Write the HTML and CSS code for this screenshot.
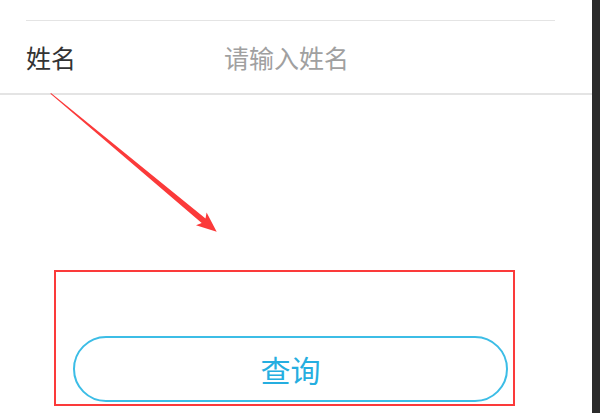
FILE: index.html
```html
<!DOCTYPE html>
<html>
<head>
	<meta charset="utf-8">
	<title>查询</title>
	<link rel="stylesheet" href="styles.css">
</head>
<body>

<div class="page">
	<div class="form-row prev"></div>
	<div class="form-row">
		<label class="field-label" for="name">姓名</label>
		<input class="field-input" id="name" type="text" placeholder="请输入姓名">
	</div>

	<div class="highlight">
		<button class="btn-query" type="button">查询</button>
	</div>

	<!-- annotation arrow -->
	<svg class="arrow" width="592" height="413" viewBox="0 0 592 413">
		<polygon fill="#fb3a3a" points="51,92.9 205.5,218.5 206.6,212.6 216.7,231.7 196,225.2 201.7,223.1 50.4,93.7"></polygon>
	</svg>
</div>
<div class="scrollbar"></div>

</body>
</html>
```
FILE: styles.css
```css
html, body {
	margin: 0;
	height: 100%;
}

body {
	display: flex;
	overflow: hidden;
	background-color: #fff;
	font-family: "Noto Sans CJK SC", "Noto Sans", sans-serif;
}

.page {
	position: relative;
	flex: 1;
}

.scrollbar {
	width: 8px;
	background-color: #2b2b2b;
}

.form-row {
	display: flex;
	align-items: center;
	height: 72px;
	padding-left: 26px;
	border-bottom: 2px solid #e4e4e4;
}

.form-row.prev {
	height: 20px;
	padding: 0;
	margin: 0 37px 0 26px;
	border-bottom: 1px solid #e4e4e4;
}

.field-label {
	width: 198px;
	font-size: 25px;
	color: #333;
}

.field-input {
	flex: 1;
	border: none;
	outline: none;
	padding: 0;
	font-family: inherit;
	font-size: 25px;
	color: #333;
	background: transparent;
}

.field-input::placeholder {
	color: #a0a0a0;
}

.highlight {
	box-sizing: border-box;
	width: 461px;
	height: 136px;
	margin: 175px 0 0 54px;
	padding: 64px 0 0 17px;
	border: 2px solid #fb3a3a;
}

.btn-query {
	display: block;
	width: 435px;
	height: 66px;
	border: 2px solid #3cbde6;
	border-radius: 33px;
	background-color: #fff;
	font-family: inherit;
	font-size: 30px;
	color: #25aee0;
}

.arrow {
	position: absolute;
	top: 0;
	left: 0;
	pointer-events: none;
}
```
